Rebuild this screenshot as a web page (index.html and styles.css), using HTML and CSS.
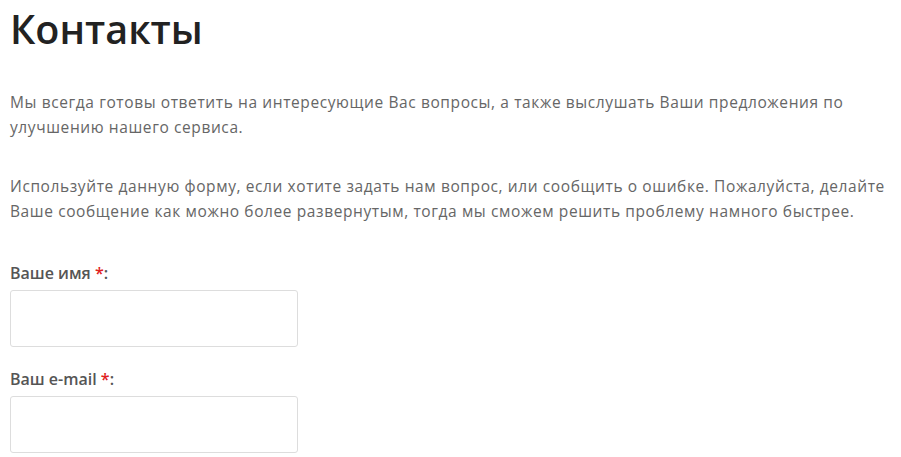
FILE: index.html
```html
<!DOCTYPE html>
<html lang="ru">
<head>
    <meta charset="UTF-8">
    <meta name="viewport" content="width=device-width, initial-scale=1.0">
    <title>Контакты</title>
    <link rel="stylesheet" href="styles.css">
</head>
<body>
    <div class="container">
        <h1>Контакты</h1>
        <p>Мы всегда готовы ответить на интересующие Вас вопросы, а также выслушать Ваши предложения по улучшению нашего сервиса.</p>
        <p>Используйте данную форму, если хотите задать нам вопрос, или сообщить о ошибке. Пожалуйста, делайте Ваше сообщение как можно более развернутым, тогда мы сможем решить проблему намного быстрее.</p>

        <form class="form">
            <label for="name">Ваше имя <span class="req">*</span>:</label>
            <input type="text" id="name">

            <label for="email">Ваш e-mail <span class="req">*</span>:</label>
            <input type="text" id="email">
        </form>
    </div>
</body>
</html>
```

FILE: styles.css
```css
body {
    font-family: "Open Sans", Arial, sans-serif;
    margin: 0;
    padding: 0 10px;
    background: #fff;
}
.container {
    max-width: 881px;
}
h1 {
    font-size: 39.5px;
    font-weight: 600;
    color: #222;
    margin: 4px 0 36px;
    line-height: 50px;
}
p {
    font-size: 15.5px;
    letter-spacing: 0.6px;
    line-height: 25px;
    color: #666;
    margin: 0 0 34px;
}
.form {
    margin-top: 39px;
}
label {
    display: block;
    font-size: 16px;
    font-weight: 600;
    color: #555;
    line-height: 20px;
    margin-bottom: 7px;
}
.req {
    color: #e02020;
}
input {
    display: block;
    width: 288px;
    height: 57px;
    box-sizing: border-box;
    border: 1px solid #ddd;
    border-radius: 3px;
    margin: 0 0 22px;
    padding: 8px;
}
```
